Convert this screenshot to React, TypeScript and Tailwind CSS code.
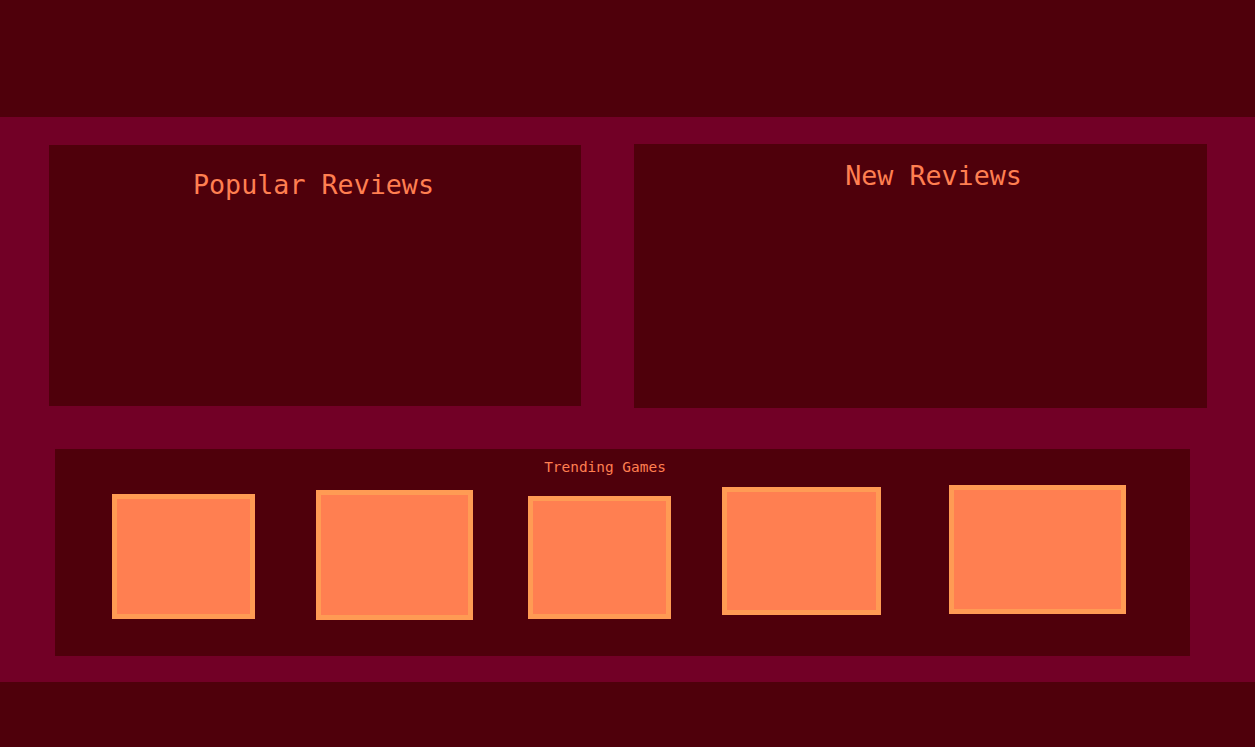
export default function App() {
  const mono = { fontFamily: '"DejaVu Sans Mono", monospace' };
  return (
    <div className="w-[1255px] h-[747px] flex flex-col bg-[#4f000b]" style={mono}>
      <header className="h-[117px] shrink-0 bg-[#4f000b]" />
      <main className="h-[565px] shrink-0 bg-[#720026] flex flex-col">
        <div className="flex items-start pl-[49px]">
          <section className="mt-[28px] w-[532px] h-[261px] bg-[#4f000b] flex justify-center pt-[27px]">
            <h2 className="text-[26.7px] leading-none h-[27px] text-[#ff7f51] font-normal pr-[3px]">Popular Reviews</h2>
          </section>
          <section className="mt-[27px] ml-[53px] w-[573px] h-[264px] bg-[#4f000b] flex justify-center pt-[19px]">
            <h2 className="text-[26.7px] leading-none h-[27px] text-[#ff7f51] font-normal pl-[26px]">New Reviews</h2>
          </section>
        </div>
        <section className="mt-[41px] ml-[55px] w-[1135px] h-[207px] bg-[#4f000b] flex flex-col">
          <div className="flex justify-center pt-[11px] pr-[35px]">
            <h3 className="text-[14.45px] leading-none h-[14px] text-[#ff7f51] font-normal">Trending Games</h3>
          </div>
          <div className="flex items-start">
            <div className="ml-[57px] mt-[20px] w-[143px] h-[125px] bg-[#ff7f51] border-[5px] border-[#ff9b54]" />
            <div className="ml-[61px] mt-[16px] w-[157px] h-[130px] bg-[#ff7f51] border-[5px] border-[#ff9b54]" />
            <div className="ml-[55px] mt-[22px] w-[143px] h-[123px] bg-[#ff7f51] border-[5px] border-[#ff9b54]" />
            <div className="ml-[51px] mt-[13px] w-[159px] h-[128px] bg-[#ff7f51] border-[5px] border-[#ff9b54]" />
            <div className="ml-[68px] mt-[11px] w-[177px] h-[129px] bg-[#ff7f51] border-[5px] border-[#ff9b54]" />
          </div>
        </section>
      </main>
      <footer className="h-[65px] shrink-0 bg-[#4f000b]" />
    </div>
  );
}
